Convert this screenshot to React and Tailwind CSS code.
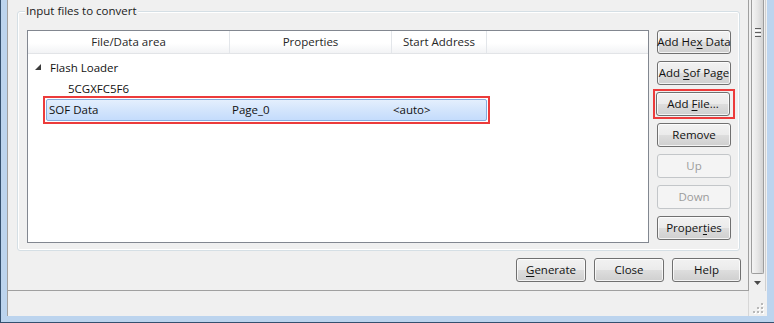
import React from 'react';

const FONT = "font-['Open_Sans','Noto_Sans',sans-serif]";

const SIDE_BUTTONS = [
  { label: ['Add He', 'x', ' Data'] },
  { label: ['Add ', 'S', 'of Page'] },
  { label: ['Add ', 'F', 'ile...'], marked: true },
  { label: ['Remove', '', ''] },
  { label: ['Up', '', ''], disabled: true },
  { label: ['Down', '', ''], disabled: true },
  { label: ['Proper', 't', 'ies'] },
];

function WinButton({ label, disabled, className = '' }) {
  const [pre, key, post] = label;
  return (
    <button
      type="button"
      disabled={disabled}
      className={`flex items-center justify-center whitespace-nowrap rounded-[3px] border text-[11.5px] leading-none ${
        disabled
          ? 'border-[#c3c6c9] bg-[#f4f4f4] text-[#9c9c9c]'
          : 'border-[#707070] bg-[linear-gradient(to_bottom,#f2f2f2_0%,#ebebeb_48%,#dddddd_52%,#cfcfcf_100%)] text-[#111] shadow-[inset_0_0_0_1px_rgba(255,255,255,0.75)]'
      } ${className}`}
    >
      <span>
        {pre}
        {key && <u className="underline-offset-2">{key}</u>}
        {post}
      </span>
    </button>
  );
}

function ExpandedGlyph() {
  return (
    <svg width="6" height="6" viewBox="0 0 6 6" className="mb-[2px]">
      <polygon points="6,0 6,6 0,6" fill="#3c3c3c" />
    </svg>
  );
}

function SizeGrip() {
  const dots = [
    [8, 0],
    [8, 4],
    [4, 4],
    [8, 8],
    [4, 8],
    [0, 8],
  ];
  return (
    <svg width="11" height="11" viewBox="0 0 11 11">
      {dots.map(([x, y]) => (
        <g key={`${x}-${y}`}>
          <rect x={x + 1} y={y + 1} width="2" height="2" fill="#ffffff" />
          <rect x={x} y={y} width="2" height="2" fill="#b8b8b8" />
        </g>
      ))}
    </svg>
  );
}

export default function App() {
  return (
    <div
      className={`${FONT} w-[774px] h-[323px] flex flex-col border-l border-b border-[#34506f] bg-[#bcd4ee] pl-[6px] pr-[7px] pb-[6px] text-[#111]`}
    >
      <div className="flex flex-1 flex-col bg-[#f0f0f0]">
        <div className="flex h-[291px]">
          {/* main dialog panel */}
          <div className="flex w-[742px] flex-col border-x border-b border-[#a0a0a0]">
            <div className="relative ml-[9px] mr-[8px] mt-[11px] flex h-[240px] rounded-[3px] border border-[#d5dfe5] pl-[9px] pr-[8px] pt-[18px] pb-[7px] shadow-[inset_0_0_0_1px_#ffffff]">
              <span className="absolute left-[7px] top-[-9px] bg-[#f0f0f0] px-[1px] text-[11.5px] leading-[16px] text-[#1a1a1a]">
                Input files to convert
              </span>

              <div className="flex w-[622px] flex-col border border-[#828790] bg-white text-[11.5px]">
                <div className="flex h-[23px] border-b border-[#e2e4e7] bg-[linear-gradient(to_bottom,#ffffff_0%,#ffffff_55%,#f2f3f5_100%)] text-[#262626]">
                  <div className="flex w-[202px] items-center justify-center border-r border-[#e3e6ea]">File/Data area</div>
                  <div className="flex w-[162px] items-center justify-center border-r border-[#e3e6ea]">Properties</div>
                  <div className="flex w-[95px] items-center justify-center border-r border-[#e3e6ea]">Start Address</div>
                </div>

                <div className="flex flex-col pt-[4px]">
                  <div className="flex h-[20px] items-center pl-[7px]">
                    <ExpandedGlyph />
                    <span className="ml-[9px]">Flash Loader</span>
                  </div>
                  <div className="flex h-[18px] items-start pl-[40px] pt-[2px]">5CGXFC5F6</div>
                  <div className="ml-[15px] h-[28px] w-[447px] border-2 border-[#ec3b3b] p-[1px]">
                    <div className="flex h-full items-center rounded-[2px] border border-[#84acdd] bg-[linear-gradient(to_bottom,#e4effd_0%,#d3e5fc_50%,#c4dcfc_100%)] pl-[2px]">
                      <span className="w-[183px]">SOF Data</span>
                      <span className="w-[161px]">Page_0</span>
                      <span>&lt;auto&gt;</span>
                    </div>
                  </div>
                </div>
              </div>

              <div className="ml-[8px] flex w-[74px] flex-col gap-[7px]">
                {SIDE_BUTTONS.map((b) =>
                  b.marked ? (
                    <div key={b.label.join('')} className="-mx-[4px] -my-[3px] border-2 border-[#ec3b3b] p-[1px]">
                      <WinButton label={b.label} className="h-[24px] w-[74px]" />
                    </div>
                  ) : (
                    <WinButton key={b.label.join('')} label={b.label} disabled={b.disabled} className="h-[24px] w-[74px]" />
                  )
                )}
              </div>
            </div>

            <div className="mt-[7px] mr-[7px] flex justify-end gap-[8px]">
              <WinButton label={['', 'G', 'enerate']} className="h-[24px] w-[70px]" />
              <WinButton label={['Close', '', '']} className="h-[24px] w-[70px]" />
              <WinButton label={['Help', '', '']} className="h-[24px] w-[69px]" />
            </div>
          </div>

          {/* window scrollbar */}
          <div className="ml-[2px] flex w-[14px] flex-col">
            <div className="flex h-[274px] flex-col items-center rounded-b-[2px] border-x border-b border-[#9d9d9d] bg-[linear-gradient(to_right,#f4f4f4_0%,#e6e6e6_50%,#d2d2d2_100%)] pt-[28px]">
              <div className="flex flex-col gap-[1px]">
                <div className="h-[1px] w-[6px] bg-[#5e5e5e]" />
                <div className="h-[1px] w-[6px] bg-[#ffffff]" />
                <div className="h-[1px] w-[6px] bg-[#5e5e5e]" />
                <div className="h-[1px] w-[6px] bg-[#ffffff]" />
                <div className="h-[1px] w-[6px] bg-[#5e5e5e]" />
              </div>
            </div>
            <div className="flex flex-1 items-center justify-center">
              <svg width="7" height="4" viewBox="0 0 7 4">
                <polygon points="0,0 7,0 3.5,4" fill="#4a4a4a" />
              </svg>
            </div>
          </div>
          <div className="ml-[1px] w-[2px] border-l border-[#d0d0d0]" />
        </div>

        {/* status bar */}
        <div className="flex flex-1">
          <div className="w-[741px] border-l border-[#a0a0a0]" />
          <div className="flex flex-1 items-end justify-end border-l border-[#d7d7d7] pb-[2px] pr-[3px]">
            <SizeGrip />
          </div>
        </div>
      </div>
    </div>
  );
}
